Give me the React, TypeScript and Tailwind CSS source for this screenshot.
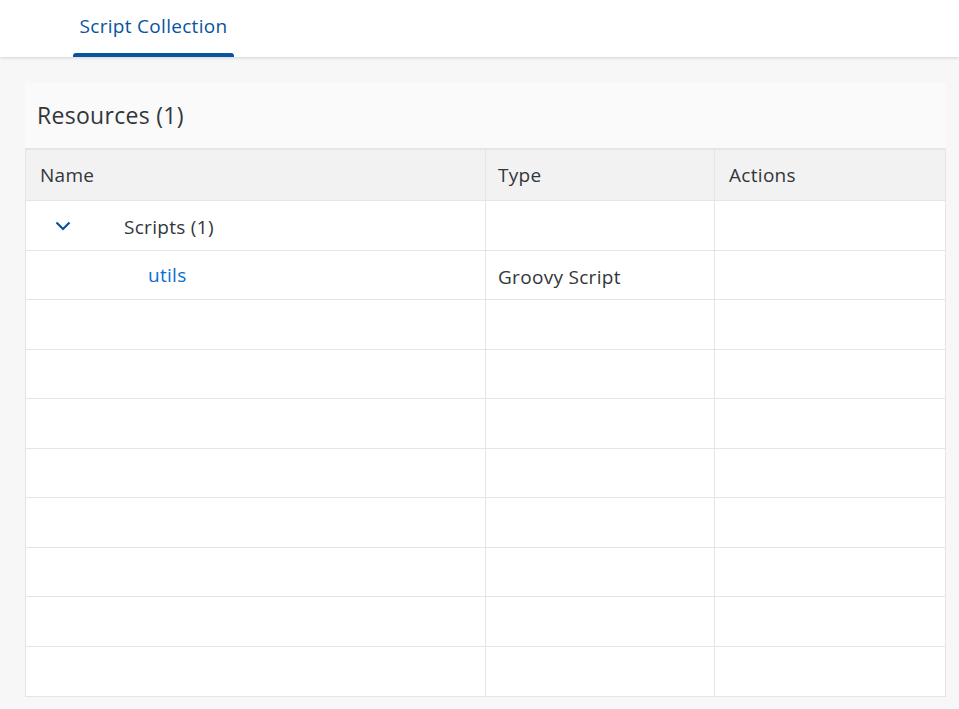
import React from "react"

const rowHeights = ["h-[50px]", "h-[49px]", "h-[50px]", "h-[49px]", "h-[50px]", "h-[49px]", "h-[50px]", "h-[50px]"]

export default function App() {
    return (
        <div className="min-h-[709px] bg-[#f7f7f7] font-['Open_Sans',sans-serif] text-[#32363a]">
            <div className="h-[57px] bg-white shadow-[0_1px_3px_rgba(0,0,0,0.15)] relative z-10">
                <div className="ml-[73px] w-[161px] h-[57px] flex flex-col">
                    <div className="flex-1 flex items-center justify-center text-[19px] tracking-[0.3px] text-[#0854a0]">Script Collection</div>
                    <div className="h-[4px] bg-[#0854a0] rounded-t-[3px]"></div>
                </div>
            </div>
            <div className="px-[25px] pt-[26px] pb-[12px] pr-[13px]">
                <div className="bg-[#fafafa] h-[66px] flex items-center px-[12px] text-[23px] tracking-[0.3px] border-b border-[#e5e5e5]">Resources (1)</div>
                <table className="w-full border-collapse bg-white text-[19px] tracking-[0.3px]">
                    <thead>
                        <tr className="bg-[#f2f2f2] h-[51px]">
                            <th className="w-[460px] text-left font-normal px-[14px] border border-[#e5e5e5]">Name</th>
                            <th className="w-[229px] text-left font-normal px-[12px] border border-[#e5e5e5]">Type</th>
                            <th className="text-left font-normal px-[14px] border border-[#e5e5e5]">Actions</th>
                        </tr>
                    </thead>
                    <tbody>
                        <tr className="h-[50px]">
                            <td className="border border-[#e5e5e5] px-[14px]">
                                <div className="flex items-center">
                                    <svg width="16" height="10" viewBox="0 0 16 10" className="ml-[15px] mr-[53px]">
                                        <path d="M1.5 1.5 L8 8 L14.5 1.5" fill="none" stroke="#0854a0" strokeWidth="2.2" />
                                    </svg>
                                    <span className="pt-[3px]">Scripts (1)</span>
                                </div>
                            </td>
                            <td className="border border-[#e5e5e5]"></td>
                            <td className="border border-[#e5e5e5]"></td>
                        </tr>
                        <tr className="h-[49px]">
                            <td className="border border-[#e5e5e5] pl-[122px] pt-[1px] text-[#0a6ed1]">utils</td>
                            <td className="border border-[#e5e5e5] px-[12px] pt-[4px]">Groovy Script</td>
                            <td className="border border-[#e5e5e5]"></td>
                        </tr>
                        {rowHeights.map((h, index) => (
                            <tr key={index} className={h}>
                                <td className="border border-[#e5e5e5]"></td>
                                <td className="border border-[#e5e5e5]"></td>
                                <td className="border border-[#e5e5e5]"></td>
                            </tr>
                        ))}
                    </tbody>
                </table>
            </div>
        </div>
    )
}
